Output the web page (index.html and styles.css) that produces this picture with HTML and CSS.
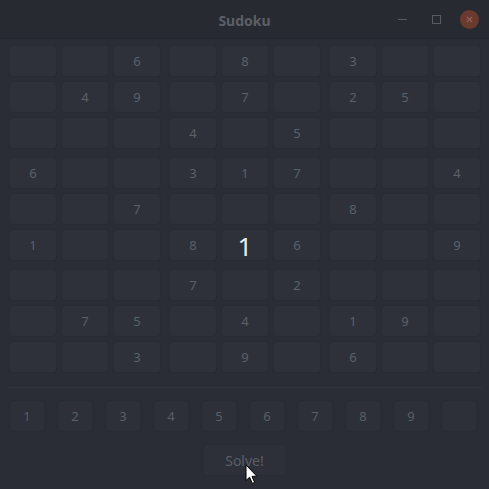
FILE: index.html
```html
<!DOCTYPE html>
<html>
<head>
<meta charset="utf-8">
<link rel="stylesheet" href="styles.css">
</head>
<body>
<div class="window">
  <header class="titlebar">
    <div class="title">Sudoku</div>
    <div class="controls">
      <span class="ctl min"></span>
      <span class="ctl max"></span>
      <span class="ctl close">
        <svg width="19" height="19" viewBox="0 0 19 19"><circle cx="9.5" cy="9.5" r="9.5" fill="#6b3a2f"/><path d="M6.8 6.8 L12.2 12.2 M12.2 6.8 L6.8 12.2" stroke="#94615a" stroke-width="1.2"/></svg>
      </span>
    </div>
  </header>
  <main class="content">
    <div class="board">
      <div class="block">
        <div class="cell"></div><div class="cell"></div><div class="cell">6</div>
        <div class="cell"></div><div class="cell">4</div><div class="cell">9</div>
        <div class="cell"></div><div class="cell"></div><div class="cell"></div>
      </div>
      <div class="block">
        <div class="cell"></div><div class="cell">8</div><div class="cell"></div>
        <div class="cell"></div><div class="cell">7</div><div class="cell"></div>
        <div class="cell">4</div><div class="cell"></div><div class="cell">5</div>
      </div>
      <div class="block">
        <div class="cell">3</div><div class="cell"></div><div class="cell"></div>
        <div class="cell">2</div><div class="cell">5</div><div class="cell"></div>
        <div class="cell"></div><div class="cell"></div><div class="cell"></div>
      </div>
      <div class="block">
        <div class="cell">6</div><div class="cell"></div><div class="cell"></div>
        <div class="cell"></div><div class="cell"></div><div class="cell">7</div>
        <div class="cell">1</div><div class="cell"></div><div class="cell"></div>
      </div>
      <div class="block">
        <div class="cell">3</div><div class="cell">1</div><div class="cell">7</div>
        <div class="cell"></div><div class="cell"></div><div class="cell"></div>
        <div class="cell">8</div><div class="cell focus">1</div><div class="cell">6</div>
      </div>
      <div class="block">
        <div class="cell"></div><div class="cell"></div><div class="cell">4</div>
        <div class="cell">8</div><div class="cell"></div><div class="cell"></div>
        <div class="cell"></div><div class="cell"></div><div class="cell">9</div>
      </div>
      <div class="block">
        <div class="cell"></div><div class="cell"></div><div class="cell"></div>
        <div class="cell"></div><div class="cell">7</div><div class="cell">5</div>
        <div class="cell"></div><div class="cell"></div><div class="cell">3</div>
      </div>
      <div class="block">
        <div class="cell">7</div><div class="cell"></div><div class="cell">2</div>
        <div class="cell"></div><div class="cell">4</div><div class="cell"></div>
        <div class="cell"></div><div class="cell">9</div><div class="cell"></div>
      </div>
      <div class="block">
        <div class="cell"></div><div class="cell"></div><div class="cell"></div>
        <div class="cell">1</div><div class="cell">9</div><div class="cell"></div>
        <div class="cell">6</div><div class="cell"></div><div class="cell"></div>
      </div>
    </div>
    <hr class="sep">
    <div class="numbers">
      <button class="num">1</button><button class="num">2</button><button class="num">3</button>
      <button class="num">4</button><button class="num">5</button><button class="num">6</button>
      <button class="num">7</button><button class="num">8</button><button class="num">9</button>
      <button class="num"></button>
    </div>
    <div class="actions">
      <button class="solve">Solve!</button>
    </div>
  </main>
  <svg class="cursor" width="13" height="21" viewBox="0 0 13 21"><path d="M1 1 L1 16.5 L4.6 13.2 L7.3 19.4 L9.6 18.4 L7 12.4 L11.8 12.2 Z" fill="#ffffff" stroke="#000000" stroke-width="1" stroke-linejoin="round"/></svg>
</div>
</body>
</html>
```
FILE: styles.css
```css
* { box-sizing: border-box; }
html, body {
  margin: 0;
  padding: 0;
  background: #2a2d35;
  width: 489px;
  height: 489px;
  overflow: hidden;
}
.window {
  position: relative;
  width: 489px;
  height: 489px;
  background: #2a2d35;
  font-family: "Noto Sans", "Open Sans", sans-serif;
  color: #5c6068;
}
.titlebar {
  position: relative;
  height: 39px;
  background: #272a31;
  border-bottom: 1px solid #24272d;
  display: flex;
  align-items: center;
  justify-content: center;
}
.title {
  font-weight: bold;
  font-size: 14px;
  color: #5b5f67;
  padding-top: 3px;
}
.controls {
  position: absolute;
  right: 10px;
  top: 10px;
  display: flex;
  align-items: center;
  height: 19px;
}
.ctl { display: block; }
.ctl.min {
  width: 9px;
  height: 1px;
  background: #595c63;
  margin-right: 25px;
}
.ctl.max {
  width: 9px;
  height: 9px;
  border: 1px solid #595c63;
  margin-right: 19px;
}
.ctl.close { width: 19px; height: 19px; }
.ctl.close svg { display: block; }
.content {
  padding: 6px 8px 0 9px;
}
.board {
  display: grid;
  grid-template-columns: repeat(3, 152px);
  grid-template-rows: repeat(3, 104px);
  gap: 8px;
}
.block {
  display: grid;
  grid-template-columns: repeat(3, 48px);
  grid-template-rows: repeat(3, 32px);
  gap: 4px;
}
.cell {
  background: #2e3139;
  border: 1px solid #282b31;
  border-radius: 4px;
  display: flex;
  align-items: center;
  justify-content: center;
  font-size: 13px;
  color: #5c6068;
}
.cell.focus {
  font-size: 26px;
  color: #e8ecf0;
  padding-top: 1px;
}
.sep {
  margin: 14px 0 0 -1px;
  width: 474px;
  height: 1px;
  border: 0;
  background: #30333b;
}
.numbers {
  display: flex;
  gap: 12px;
  margin-top: 12px;
}
.num, .solve {
  font-family: "Noto Sans", "Open Sans", sans-serif;
  background: #2d3038;
  border: 1px solid #282b31;
  border-radius: 4px;
  color: #5a5e66;
  font-size: 13px;
  padding: 0;
  display: flex;
  align-items: center;
  justify-content: center;
}
.num {
  width: 36px;
  height: 32px;
}
.actions {
  display: flex;
  justify-content: center;
  margin-top: 12px;
  padding-right: 1px;
}
.solve {
  width: 84px;
  height: 32px;
  font-size: 14px;
}
.cursor {
  position: absolute;
  left: 245px;
  top: 464px;
}
```
